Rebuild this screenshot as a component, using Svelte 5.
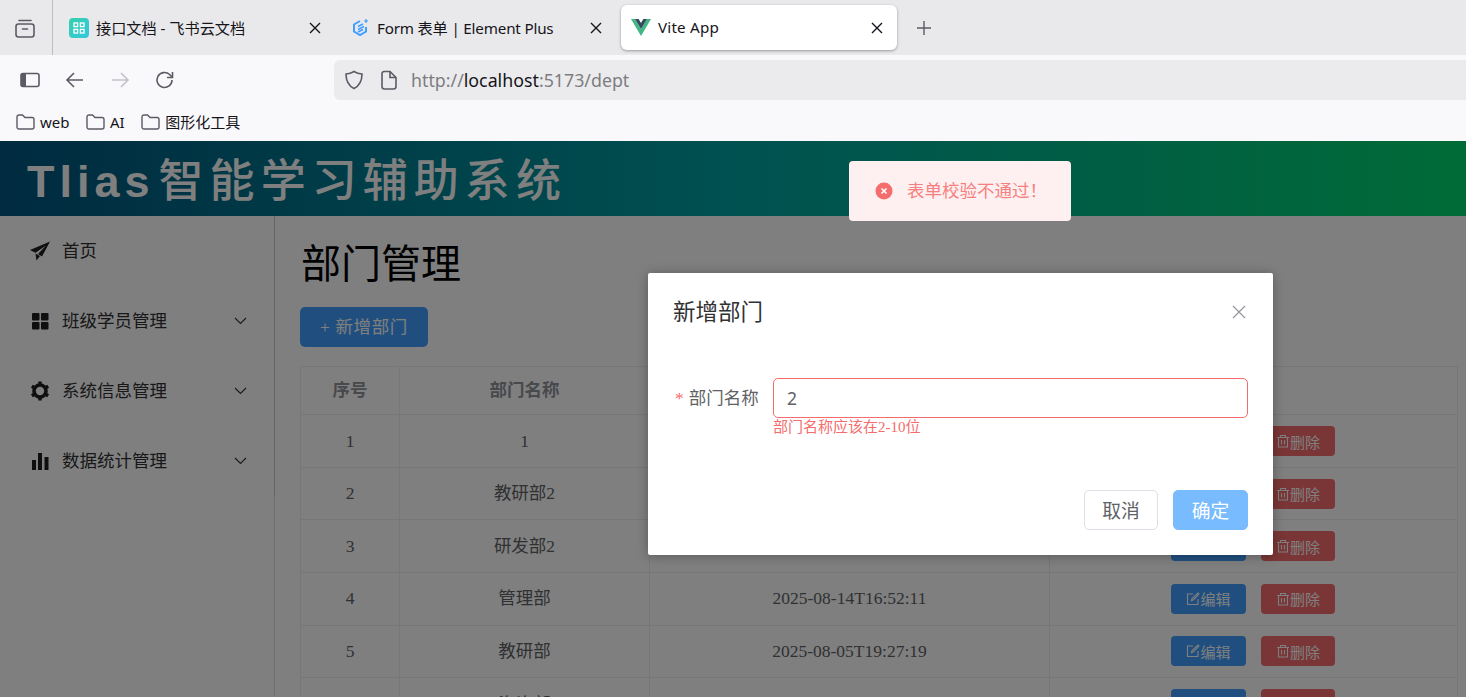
<script>
	let deptName = $state("2");

	const rows = [
		{ id: 1, name: "1", time: "2025-08-20T10:15:42" },
		{ id: 2, name: "教研部2", time: "2025-08-18T09:30:05" },
		{ id: 3, name: "研发部2", time: "2025-08-16T14:22:37" },
		{ id: 4, name: "管理部", time: "2025-08-14T16:52:11" },
		{ id: 5, name: "教研部", time: "2025-08-05T19:27:19" },
		{ id: 6, name: "咨询部", time: "2025-08-05T19:27:10" }
	];

	const menus = ["班级学员管理", "系统信息管理", "数据统计管理"];
	const bookmarks = ["web", "AI", "图形化工具"];
</script>

<div class="window">
	<div class="tabstrip">
		<div class="tabs-btn">
			<svg width="22" height="22" viewBox="0 0 22 22" fill="none" stroke="#5b5b66" stroke-width="1.6">
				<rect x="2" y="7" width="18" height="13" rx="2.5" />
				<path d="M5 3.500h12" stroke-linecap="round" />
				<path d="M8.500 12h5" stroke-linecap="round" />
			</svg>
		</div>
		<div class="tab">
			<svg class="fav" width="20" height="20" viewBox="0 0 20 20">
				<defs>
					<linearGradient id="fs" x1="0" y1="0" x2="1" y2="1">
						<stop offset="0" stop-color="#35cfa9" />
						<stop offset="1" stop-color="#35c8e0" />
					</linearGradient>
				</defs>
				<rect width="20" height="20" rx="4" fill="url(#fs)" />
				<g fill="none" stroke="#fff" stroke-width="1.3">
					<rect x="5" y="5" width="3.6" height="3.6" />
					<rect x="11.4" y="5" width="3.6" height="3.6" />
					<rect x="5" y="11.4" width="3.6" height="3.6" />
					<rect x="11.4" y="11.4" width="3.6" height="3.6" />
				</g>
			</svg>
			<span class="tab-title">接口文档 - 飞书云文档</span>
			<svg class="close" width="12" height="12" viewBox="0 0 12 12"><path d="M1 1l10 10M11 1L1 11" stroke="#15141a" stroke-width="1.4" /></svg>
		</div>
		<div class="tab second">
			<svg class="fav" width="18" height="20" viewBox="0 0 18 20" fill="none">
				<path d="M8 3L2 6.500v7L8 17l6-3.500V9" stroke="#409eff" stroke-width="2" />
				<path d="M6 8.500l5-2.500M6 11.500l6-3M6 14l5-2.500" stroke="#409eff" stroke-width="1.6" />
				<path d="M14 1v4M12 3h4" stroke="#409eff" stroke-width="1.2" />
			</svg>
			<span class="tab-title">Form 表单 | Element Plus</span>
			<svg class="close" width="12" height="12" viewBox="0 0 12 12"><path d="M1 1l10 10M11 1L1 11" stroke="#15141a" stroke-width="1.4" /></svg>
		</div>
		<div class="tab active">
			<svg class="fav" width="20" height="18" viewBox="0 0 20 18">
				<path d="M0 0h4l6 10 6-10h4L10 17z" fill="#41b883" />
				<path d="M4 0h3.600L10 4l2.400-4H16l-6 10z" fill="#35495e" />
			</svg>
			<span class="tab-title">Vite App</span>
			<svg class="close" width="12" height="12" viewBox="0 0 12 12"><path d="M1 1l10 10M11 1L1 11" stroke="#15141a" stroke-width="1.4" /></svg>
		</div>
		<svg class="plus" width="16" height="16" viewBox="0 0 16 16"><path d="M8 1v14M1 8h14" stroke="#5b5b66" stroke-width="1.4" /></svg>
	</div>

	<div class="toolbar">
		<div class="nav">
			<svg width="20" height="16" viewBox="0 0 20 16" fill="none">
				<rect x="1" y="1.5" width="18" height="13" rx="2" stroke="#5b5b66" stroke-width="1.6" />
				<path d="M1 3.500a2 2 0 012-2h3v13H3a2 2 0 01-2-2z" fill="#5b5b66" />
			</svg>
			<svg width="20" height="20" viewBox="0 0 20 20" fill="none" stroke="#5b5b66" stroke-width="1.6">
				<path d="M18 10H2M9 3l-7 7 7 7" />
			</svg>
			<svg width="20" height="20" viewBox="0 0 20 20" fill="none" stroke="#c2c2c8" stroke-width="1.6">
				<path d="M2 10h16M11 3l7 7-7 7" />
			</svg>
			<svg width="20" height="20" viewBox="0 0 20 20" fill="none" stroke="#5b5b66" stroke-width="1.6">
				<path d="M17 10a7.500 7.500 0 11-2.400-5.500L17 7" />
				<path d="M17.500 2v5.500H12" />
			</svg>
		</div>
		<div class="urlbar">
			<svg class="shield" width="20" height="20" viewBox="0 0 20 20" fill="none" stroke="#5b5b66" stroke-width="1.6">
				<path d="M10 1.500c2.500 1.600 5 2.300 8 2.500 0 7-2 11.500-8 14.500C4 15.500 2 11 2 4c3-.2 5.500-.9 8-2.500z" />
			</svg>
			<svg width="16" height="20" viewBox="0 0 16 20" fill="none" stroke="#5b5b66" stroke-width="1.6">
				<path d="M3 1.500h6l6 6v9a2.500 2.500 0 01-2.500 2.500h-9A2.500 2.500 0 011 16.500V3.500a2 2 0 012-2z" />
				<path d="M9 1.500v6h6" />
			</svg>
			<span class="url"><span class="dim">http://</span>localhost<span class="dim">:5173/dept</span></span>
		</div>
	</div>

	<div class="bookmarks">
		{#each bookmarks as b}
			<div class="bookmark">
				<svg width="19" height="16" viewBox="0 0 19 16" fill="none" stroke="#5b5b66" stroke-width="1.4">
					<path d="M1 3a2 2 0 012-2h3.500l2.500 2.500h7a2 2 0 012 2V13a2 2 0 01-2 2H3a2 2 0 01-2-2z" />
				</svg>
				<span>{b}</span>
			</div>
		{/each}
	</div>

	<div class="page">
		<header class="banner"><span class="latin">Tlias</span>智能学习辅助系统</header>
		<div class="body">
			<aside class="aside">
				<nav class="menu">
					<div class="menu-item">
						<svg class="menu-icon" width="20" height="20" viewBox="0 0 20 20">
							<path d="M20 .5L0 9l5.500 2.800L16 4.500 8 13l4 2.500zM5.500 12.500l1 7 3.500-4.500z" fill="#1f1f1f" />
						</svg>
						<span class="label">首页</span>
					</div>
					{#each menus as m, i}
						<div class="menu-item">
							{#if i === 0}
								<svg class="menu-icon" width="20" height="20" viewBox="0 0 20 20" fill="#1f1f1f">
									<rect x="2" y="2" width="7.500" height="7.500" rx="1" />
									<rect x="11" y="2" width="7.500" height="7.500" rx="1" />
									<rect x="2" y="11" width="7.500" height="7.500" rx="1" />
									<rect x="11" y="11" width="7.500" height="7.500" rx="1" />
								</svg>
							{:else if i === 1}
								<svg class="menu-icon" width="20" height="20" viewBox="0 0 20 20" fill="none" stroke="#1f1f1f">
									<circle cx="10" cy="10" r="6" stroke-width="3.600" />
									<path d="M10 .5v3.500M10 16v3.500M1.800 5.200l3 1.800M15.200 13l3 1.800M1.800 14.800l3-1.800M15.200 7l3-1.800" stroke-width="3.400" />
								</svg>
							{:else}
								<svg class="menu-icon" width="20" height="20" viewBox="0 0 20 20" fill="#1f1f1f">
									<rect x="2" y="9" width="4" height="10" />
									<rect x="8" y="2" width="4" height="17" />
									<rect x="14.500" y="6" width="4" height="13" />
								</svg>
							{/if}
							<span class="label">{m}</span>
							<svg class="arrow" width="13" height="8" viewBox="0 0 13 8" fill="none"><path d="M1 1l5.500 5.500L12 1" stroke="#303133" stroke-width="1.100" /></svg>
						</div>
					{/each}
				</nav>
			</aside>
			<main class="main">
				<h1>部门管理</h1>
				<button class="add">+ 新增部门</button>
				<table>
					<colgroup>
						<col style="width:99px" />
						<col style="width:250px" />
						<col style="width:400px" />
						<col />
					</colgroup>
					<thead>
						<tr><th>序号</th><th>部门名称</th><th>最后操作时间</th><th>操作</th></tr>
					</thead>
					<tbody>
						{#each rows as r}
							<tr>
								<td>{r.id}</td>
								<td class:cjk={r.name.length > 1}>{r.name}</td>
								<td>{r.time}</td>
								<td>
									<div class="ops">
										<button class="small primary">
											<svg width="14" height="14" viewBox="0 0 14 14" fill="none" stroke="currentColor" stroke-width="1.100">
												<path d="M7 2H1.500v10.500H12V7" />
												<path d="M5.500 8.500l.5-2L12 1l1 1-5.500 5.700z" />
											</svg>编辑
										</button>
										<button class="small danger">
											<svg width="14" height="14" viewBox="0 0 14 14" fill="none" stroke="currentColor" stroke-width="1.100">
												<path d="M1 3.500h12M4.500 3.500V1.500h5v2M2.500 3.500v9.500h9V3.500M5.500 6v4.500M8.500 6v4.500" />
											</svg>删除
										</button>
									</div>
								</td>
							</tr>
						{/each}
					</tbody>
				</table>
			</main>
		</div>

		<div class="overlay"></div>

		<div class="message">
			<svg width="18" height="18" viewBox="0 0 18 18">
				<circle cx="9" cy="9" r="8.500" fill="#f56c6c" />
				<path d="M6.500 6.500l5 5M11.500 6.500l-5 5" stroke="#fff" stroke-width="1.700" />
			</svg>
			<span class="msg-text">表单校验不通过！</span>
		</div>

		<div class="dialog">
			<div class="dialog-head">
				<span class="dialog-title">新增部门</span>
				<svg width="14" height="14" viewBox="0 0 14 14"><path d="M1 1l12 12M13 1L1 13" stroke="#909399" stroke-width="1.100" /></svg>
			</div>
			<div class="form-row">
				<label for="dept"><i>*</i>部门名称</label>
				<div class="field">
					<input id="dept" bind:value={deptName} />
					<div class="err">部门名称应该在2-10位</div>
				</div>
			</div>
			<div class="dialog-foot">
				<button class="cancel">取消</button>
				<button class="ok">确定</button>
			</div>
		</div>
	</div>
</div>

<style>
	:global(body) {
		margin: 0;
		overflow: hidden;
	}
	.window {
		width: 1466px;
		height: 697px;
		overflow: hidden;
		display: flex;
		flex-direction: column;
		font-family: "Liberation Serif", "Noto Sans CJK SC", serif;
	}
	.tabstrip {
		height: 55px;
		background: #e9e9eb;
		display: flex;
		align-items: center;
		font-family: "Noto Sans", "Noto Sans CJK SC", sans-serif;
		font-size: 15.200px;
		letter-spacing: -0.03px;
		color: #15141a;
	}
	.tabs-btn {
		width: 53px;
		height: 100%;
		box-sizing: border-box;
		border-right: 1px solid #bdbdc1;
		padding-left: 14px;
		display: flex;
		align-items: center;
		margin-right: 1px;
	}
	.tab {
		width: 276px;
		height: 45px;
		margin-left: 5px;
		box-sizing: border-box;
		padding: 0 14px 0 10px;
		display: flex;
		align-items: center;
		gap: 7px;
		border-radius: 6px;
	}
	.tab.second {
		padding-left: 12px;
		letter-spacing: -0.18px;
	}
	.tab.active {
		background: #fff;
		box-shadow: 0 1px 3px rgba(0, 0, 0, 0.35);
		letter-spacing: 0.2px;
	}
	.tab-title {
		flex: 1;
		white-space: nowrap;
		padding-bottom: 1px;
	}
	.plus {
		margin-left: 19px;
	}
	.toolbar {
		height: 50px;
		background: #f9f9fb;
		display: flex;
		align-items: center;
		box-sizing: border-box;
	}
	.nav {
		width: 334px;
		padding-left: 20px;
		box-sizing: border-box;
		display: flex;
		align-items: center;
		gap: 25px;
	}
	.urlbar {
		flex: 1;
		height: 40px;
		background: #ebebed;
		border-radius: 6px 0 0 6px;
		display: flex;
		align-items: center;
		padding-left: 10px;
		gap: 14px;
	}
	.shield {
		margin-right: 3px;
	}
	.url {
		font-family: "Noto Sans", sans-serif;
		font-size: 17.800px;
		color: #15141a;
	}
	.dim {
		color: #7d7d80;
	}
	.bookmarks {
		height: 36px;
		box-sizing: border-box;
		padding: 0 0 3px 16px;
		background: #f9f9fb;
		display: flex;
		align-items: center;
		gap: 16.500px;
		font-family: "Noto Sans", "Noto Sans CJK SC", sans-serif;
		font-size: 15px;
		color: #15141a;
	}
	.bookmark {
		display: flex;
		align-items: center;
		gap: 5px;
	}
	.page {
		position: relative;
		flex: 1;
		min-height: 0;
		background: #fff;
		display: flex;
		flex-direction: column;
		overflow: hidden;
	}
	.banner {
		height: 75px;
		flex: none;
		box-sizing: border-box;
		padding: 6px 0 0 27px;
		background: linear-gradient(to right, #00557f, #00a3a3 50%, #00d66e);
		color: #fff;
		font-family: "Liberation Sans", "Noto Sans CJK SC", sans-serif;
		font-size: 45px;
		font-weight: 500;
		letter-spacing: 6.050px;
		line-height: 69px;
		white-space: nowrap;
	}
	.latin {
		font-weight: 700;
		letter-spacing: 5px;
		margin-right: 4px;
	}
	.body {
		flex: 1;
		display: flex;
		min-height: 0;
	}
	.aside {
		width: 275px;
		flex: none;
		box-sizing: border-box;
		border-right: 1px solid #dcdfe6;
	}
	.menu {
		height: 280px;
		margin-right: -1px;
		border-right: 1px solid #c6c8ce;
	}
	.menu-item {
		height: 70px;
		display: flex;
		align-items: center;
		padding: 0 27px 0 30px;
		box-sizing: border-box;
		font-size: 17.500px;
		color: #303133;
	}
	.label {
		padding-bottom: 4px;
	}
	.menu-icon {
		margin-right: 12px;
		flex: none;
	}
	.arrow {
		margin-left: auto;
	}
	.main {
		flex: 1;
		min-width: 0;
		padding: 0 8px 0 25px;
	}
	h1 {
		margin: 26px 0 20px 1px;
		font-size: 40px;
		line-height: 45px;
		font-weight: 400;
		color: #000;
	}
	.add {
		display: block;
		width: 128px;
		height: 40px;
		padding: 0 0 3px;
		border: 0;
		border-radius: 5px;
		background: #409eff;
		color: #fff;
		font: inherit;
		font-size: 17.500px;
		letter-spacing: 0.6px;
	}
	table {
		width: 1158px;
		margin-top: 19px;
		table-layout: fixed;
		border-collapse: collapse;
		border: 1px solid #ebeef5;
		font-size: 17.500px;
		color: #606266;
		text-align: center;
	}
	th,
	td {
		border: 1px solid #ebeef5;
		padding: 0;
	}
	th {
		height: 43.300px;
		padding-bottom: 4px;
		color: #909399;
		font-weight: 700;
	}
	td {
		height: 51.600px;
	}
	td.cjk {
		height: 47.600px;
		padding-bottom: 4px;
	}
	.ops {
		display: flex;
		gap: 15px;
		padding-left: 121px;
	}
	.small {
		width: 75px;
		height: 30px;
		padding: 0;
		border: 0;
		border-radius: 4px;
		color: #fff;
		font: inherit;
		font-size: 15px;
		display: flex;
		align-items: center;
		justify-content: center;
	}
	.primary {
		background: #409eff;
	}
	.danger {
		background: #f56c6c;
		width: 74px;
	}
	.overlay {
		position: absolute;
		inset: 0;
		background: rgba(0, 0, 0, 0.5);
	}
	.message {
		position: absolute;
		left: 849px;
		top: 20px;
		width: 222px;
		height: 60px;
		box-sizing: border-box;
		padding-left: 26px;
		background: #fef0f0;
		border-radius: 4px;
		display: flex;
		align-items: center;
		gap: 14px;
		font-size: 17.500px;
		color: #f77f7f;
	}
	.msg-text {
		padding-bottom: 4px;
	}
	.dialog {
		position: absolute;
		left: 648px;
		top: 132px;
		width: 625px;
		height: 282px;
		box-sizing: border-box;
		padding: 25px;
		background: #fff;
		border-radius: 2px;
		box-shadow: 0 1px 12px rgba(0, 0, 0, 0.3);
		display: flex;
		flex-direction: column;
	}
	.dialog-head {
		display: flex;
		justify-content: space-between;
		align-items: center;
		padding-right: 2px;
		height: 28px;
	}
	.dialog-title {
		font-size: 22.500px;
		color: #303133;
		padding-bottom: 4px;
	}
	.form-row {
		display: flex;
		margin-top: 52px;
	}
	label {
		width: 100px;
		line-height: 40px;
		font-size: 17.500px;
		color: #606266;
		padding-left: 2px;
		box-sizing: border-box;
		white-space: nowrap;
	}
	label i {
		color: #f56c6c;
		font-style: normal;
		margin-right: 5px;
	}
	.field {
		flex: 1;
	}
	input {
		display: block;
		width: 100%;
		height: 40px;
		box-sizing: border-box;
		padding: 0 13px;
		border: 1.250px solid #f56c6c;
		border-radius: 5px;
		outline: none;
		font-family: "Noto Sans", sans-serif;
		font-size: 17.500px;
		color: #606266;
	}
	.err {
		font-size: 15px;
		line-height: 19px;
		color: #f56c6c;
	}
	.dialog-foot {
		margin-top: auto;
		display: flex;
		justify-content: flex-end;
		gap: 15px;
	}
	.cancel,
	.ok {
		height: 40px;
		padding: 0 0 2px;
		border-radius: 5px;
		font: inherit;
		font-size: 18.750px;
	}
	.cancel {
		width: 74px;
		background: #fff;
		border: 1px solid #dcdfe6;
		color: #606266;
	}
	.ok {
		width: 75px;
		background: #79bbff;
		border: 1px solid #79bbff;
		color: #fff;
	}
</style>
